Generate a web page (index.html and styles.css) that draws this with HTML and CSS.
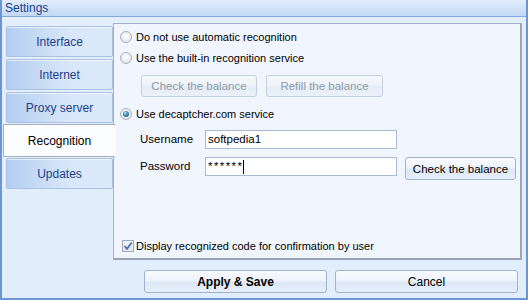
FILE: index.html
```html
<!DOCTYPE html>
<html>
<head>
<meta charset="utf-8">
<link rel="stylesheet" href="styles.css">
</head>
<body>
<div class="window">
  <div class="titlebar">Settings</div>
  <div class="main">
    <nav class="tabs">
      <div class="tab">Interface</div>
      <div class="tab">Internet</div>
      <div class="tab">Proxy server</div>
      <div class="tab active">Recognition</div>
      <div class="tab">Updates</div>
    </nav>
    <section class="panel">
      <div class="opt first"><span class="radio"></span><span>Do not use automatic recognition</span></div>
      <div class="opt second"><span class="radio"></span><span>Use the built-in recognition service</span></div>
      <div class="btnrow">
        <button class="btn disabled w116">Check the balance</button>
        <button class="btn disabled w117">Refill the balance</button>
      </div>
      <div class="opt third"><span class="radio on"></span><span>Use decaptcher.com service</span></div>
      <div class="field user">
        <span class="label">Username</span>
        <div class="input">softpedia1</div>
      </div>
      <div class="field pass">
        <span class="label">Password</span>
        <div class="input"><span class="stars">******</span><span class="caret"></span></div>
        <button class="btn check">Check the balance</button>
      </div>
      <div class="checkrow">
        <span class="checkbox"><svg width="10" height="10" viewBox="0 0 10 10"><path d="M1.5 5 L4 7.8 L8.7 1.6" fill="none" stroke="#4d6fa0" stroke-width="1.7"/></svg></span>
        <span>Display recognized code for confirmation by user</span>
      </div>
    </section>
  </div>
  <div class="actions">
    <button class="btn big bold">Apply &amp; Save</button>
    <button class="btn big">Cancel</button>
  </div>
</div>
</body>
</html>
```
FILE: styles.css
```css
html, body {
  margin: 0;
  padding: 0;
}
body {
  width: 528px;
  height: 300px;
  overflow: hidden;
  font-family: "Liberation Sans", Arial, sans-serif;
  font-size: 11px;
  color: #000;
}
.window {
  box-sizing: border-box;
  width: 528px;
  height: 300px;
  background: #e3eefd;
  border: 2px solid #6b96d4;
  border-top: 0;
  display: flex;
  flex-direction: column;
}
.titlebar {
  height: 16px;
  border-bottom: 1px solid #86a9dd;
  background: linear-gradient(#e3eefc, #c3d8f5);
  color: #15428b;
  font-size: 12px;
  line-height: 17px;
  padding-left: 3px;
}
.main {
  display: flex;
  align-items: flex-start;
  padding-top: 6px;
}
.tabs {
  display: flex;
  flex-direction: column;
  gap: 2px;
  width: 107px;
  margin-top: 3px;
  padding-left: 4px;
}
.tab {
  box-sizing: border-box;
  height: 31px;
  border: 1px solid #a9c0e3;
  border-radius: 2px;
  background: linear-gradient(to right, #b5cdf1 0%, #c7dbf6 30%, #d9e7fa 60%, #dce9fb 100%);
  box-shadow: inset 0 1px 0 rgba(255,255,255,0.6);
  display: flex;
  align-items: center;
  justify-content: center;
  color: #1a3f8a;
  font-size: 12px;
}
.tab.active {
  height: 33px;
  margin: -1px -3px -1px -3px;
  background: #fbfdff;
  color: #000;
  border-color: #a3b0c4;
  border-right-color: #fbfdff;
  box-shadow: none;
  position: relative;
  z-index: 1;
}
.panel {
  flex: 1;
  margin-right: 4px;
  height: 237px;
  box-sizing: border-box;
  border: 1px solid #a3b1c6;
  border-right: 2px solid #99a5b7;
  border-bottom: 2px solid #99a5b7;
  background: #f1f6fe;
  padding: 4px 0 0 6px;
  display: flex;
  flex-direction: column;
  font-size: 11px;
}
.opt {
  display: flex;
  align-items: center;
  height: 18px;
  gap: 4px;
}
.opt.second { margin-top: 3px; }
.opt.third { margin-top: 8px; }
.radio {
  box-sizing: border-box;
  width: 12px;
  height: 12px;
  border-radius: 50%;
  border: 1px solid #a8b2c0;
  background: radial-gradient(circle at 50% 40%, #ffffff 0%, #eef1f4 45%, #d6dce4 100%);
  display: flex;
  align-items: center;
  justify-content: center;
}
.radio.on::after {
  content: "";
  width: 6px;
  height: 6px;
  border-radius: 50%;
  background: radial-gradient(circle at 40% 35%, #a6e3f8 0%, #3b86b8 45%, #1e4c76 100%);
}
.btnrow {
  display: flex;
  gap: 9px;
  margin: 8px 0 0 21px;
}
.btn {
  font-family: inherit;
  font-size: 11.5px;
  box-sizing: border-box;
  border: 1px solid #9fb3d0;
  border-radius: 3px;
  background: linear-gradient(#f8fbfe 0%, #edf3fb 48%, #dde8f6 52%, #e6eef9 100%);
  padding: 0;
  color: #000;
  height: 22px;
}
.btn.disabled {
  color: #8e9aa9;
  border-color: #c4d0e0;
  background: linear-gradient(#f6f9fd 0%, #eef3fa 48%, #e4ecf7 52%, #ebf1fa 100%);
}
.w116 { width: 116px; }
.w117 { width: 117px; }
.field {
  display: flex;
  align-items: flex-start;
  margin-left: 20px;
}
.field.user { margin-top: 7px; }
.field.pass { margin-top: 8px; }
.label {
  width: 65px;
  line-height: 19px;
  font-size: 11.5px;
}
.input {
  box-sizing: border-box;
  width: 192px;
  height: 19px;
  border: 1px solid #a7bad7;
  background: #fff;
  padding-left: 2px;
  line-height: 17px;
  font-size: 11.5px;
  display: flex;
  align-items: center;
}
.stars {
  letter-spacing: 1.4px;
}
.caret {
  display: inline-block;
  width: 1px;
  height: 14px;
  background: #000;
}
.btn.check {
  width: 111px;
  height: 23px;
  margin-left: 8px;
}
.checkrow {
  margin-top: auto;
  margin-bottom: 5px;
  height: 14px;
  display: flex;
  align-items: center;
  gap: 2px;
}
.checkbox {
  box-sizing: border-box;
  width: 12px;
  height: 12px;
  margin-left: 2px;
  border: 1px solid #9fabbd;
  background: linear-gradient(#f0f3f7, #dfe5ec);
  display: flex;
  align-items: center;
  justify-content: center;
}
.actions {
  display: flex;
  justify-content: flex-end;
  gap: 8px;
  margin-top: 10px;
  padding-right: 8px;
}
.btn.big {
  width: 183px;
  height: 23px;
  font-size: 12px;
}
.btn.bold { font-weight: bold; }
```
